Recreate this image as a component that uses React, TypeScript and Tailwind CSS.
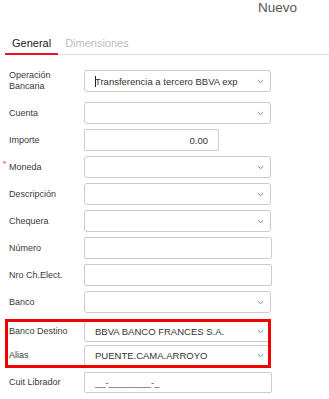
import React from 'react';

type Field = {
  label: string;
  kind: 'select' | 'text';
  value?: string;
  width?: string;
  align?: 'left' | 'right';
  gap: string;
  required?: boolean;
  caret?: boolean;
  placeholder?: boolean;
};

const Chevron = () => (
  <svg width="7" height="5" viewBox="0 0 7 5" className="shrink-0">
    <polyline points="0.8,1.2 3.5,3.6 6.2,1.2" fill="none" stroke="#4a8ee0" strokeWidth="1" />
  </svg>
);

function Input({ field }: { field: Field }) {
  const rounded = field.kind === 'select' ? 'rounded-[3px]' : 'rounded-[2px]';
  return (
    <div
      className={`flex items-center h-full border border-[#cbcbcb] bg-white ${rounded} ${
        field.width ?? 'w-[187px]'
      } ${field.align === 'right' ? 'justify-end pr-[10px]' : 'pl-[10px] pr-[6px]'}`}
    >
      <span
        className={`flex-1 truncate text-[9.5px] leading-[13px] ${
          field.align === 'right' ? 'text-right' : ''
        } ${field.placeholder ? 'text-[#555]' : 'text-[#333]'}`}
      >
        {field.caret && <span className="inline-block w-px h-[11px] bg-[#222] align-middle -mr-px" />}
        {field.value}
      </span>
      {field.kind === 'select' && <Chevron />}
    </div>
  );
}

function Row({ field, height = 'h-[22px]' }: { field: Field; height?: string }) {
  return (
    <div className={`flex items-center ${height} ${field.gap}`}>
      <div className="relative w-[84px] shrink-0 pl-[9px] pr-1 text-[9px] leading-[11px] text-[#3a3a3a]">
        {field.required && (
          <span className="absolute left-[3px] -top-[4px] text-[8px] text-[#e8112d]">*</span>
        )}
        {field.label}
      </div>
      <Input field={field} />
    </div>
  );
}

const fields: Field[] = [
  { label: 'Cuenta', kind: 'select', gap: 'mt-[10px]' },
  { label: 'Importe', kind: 'text', value: '0.00', width: 'w-[135px]', align: 'right', gap: 'mt-[5px]' },
  { label: 'Moneda', kind: 'select', gap: 'mt-[5px]', required: true },
  { label: 'Descripción', kind: 'select', gap: 'mt-[5px]' },
  { label: 'Chequera', kind: 'select', gap: 'mt-[5px]' },
  { label: 'Número', kind: 'text', width: 'w-[188px]', gap: 'mt-[5px]' },
  { label: 'Nro Ch.Elect.', kind: 'text', width: 'w-[188px]', gap: 'mt-[5px]' },
  { label: 'Banco', kind: 'select', gap: 'mt-[5px]' },
];

export default function App() {
  return (
    <div
      className="w-[329px] h-[399px] overflow-hidden bg-white"
      style={{ fontFamily: '"Liberation Sans", Arial, sans-serif' }}
    >
      {/* Header */}
      <div className="flex justify-end pr-[32px] pt-[1px] h-[16px]">
        <span className="text-[13.5px] leading-[14px] text-[#555]">Nuevo</span>
      </div>

      {/* Tabs */}
      <div className="ml-[5px] mt-[17px] flex border-b border-[#dedede] h-[22px]">
        <div className="px-[7px] pt-[3px] border-b-2 border-[#e8112d] -mb-px text-[11px] leading-[15px] text-[#222]">
          General
        </div>
        <div className="px-[7px] pt-[3px] text-[11px] leading-[15px] text-[#bdbdbd]">Dimensiones</div>
      </div>

      {/* Form */}
      <div className="mt-[15px]">
        <Row
          field={{
            label: 'Operación Bancaria',
            kind: 'select',
            value: 'Transferencia a tercero BBVA exp',
            gap: '',
            caret: true,
          }}
        />
        {fields.map((f) => (
          <Row key={f.label} field={f} />
        ))}

        <div className="relative mt-[8px]">
          <Row
            height="h-[21px]"
            field={{ label: 'Banco Destino', kind: 'select', value: 'BBVA BANCO FRANCES S.A.', gap: '' }}
          />
          <Row
            height="h-[21px]"
            field={{ label: 'Alias', kind: 'select', value: 'PUENTE.CAMA.ARROYO', gap: 'mt-[3px]' }}
          />
          <div className="pointer-events-none absolute left-[5px] -top-[2px] w-[266px] h-[49px] border-[3px] border-[#f20000]" />
        </div>

        <Row
          height="h-[21px]"
          field={{
            label: 'Cuit Librador',
            kind: 'text',
            value: '__-________-_',
            width: 'w-[188px]',
            gap: 'mt-[6px]',
            placeholder: true,
          }}
        />
      </div>
    </div>
  );
}
